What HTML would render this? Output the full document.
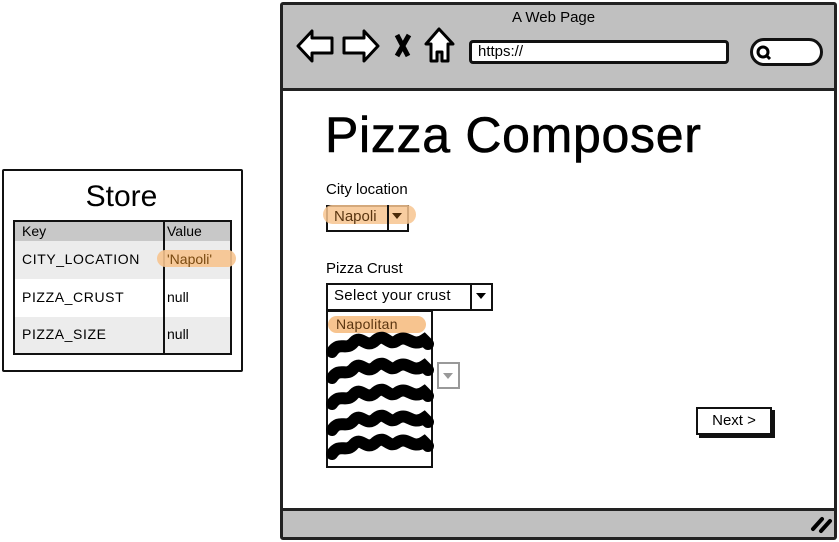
<!DOCTYPE html>
<html><head><meta charset="utf-8"><style>
*{margin:0;padding:0;box-sizing:border-box}
body{width:839px;height:542px;background:#fff;position:relative;overflow:hidden;font-family:"Liberation Sans",sans-serif;color:#000}
.a{position:absolute}
</style></head><body>
<!-- Store -->
<div class="a" style="left:2px;top:169px;width:241px;height:203px;border:2px solid #111;border-radius:2px"></div>
<div class="a" style="left:0;top:180px;width:243px;text-align:center;font-size:30px">Store</div>
<div class="a" style="left:13px;top:220px;width:219px;height:135px;border:2px solid #111">
 <div class="a" style="left:0;top:0;width:215px;height:19px;background:#c8c8c8"></div>
 <div class="a" style="left:0;top:19px;width:215px;height:38px;background:#ececec"></div>
 <div class="a" style="left:0;top:95px;width:215px;height:36px;background:#ececec"></div>
 <div class="a" style="left:148px;top:0;width:2px;height:131px;background:#111"></div>
 <div class="a" style="left:7px;top:1px;font-size:14px">Key</div>
 <div class="a" style="left:152px;top:1px;font-size:14px">Value</div>
 <div class="a" style="left:142px;top:28px;width:79px;height:17px;border-radius:9px;background:#f7c48f;opacity:.9"></div>
 <div class="a" style="left:7px;top:29px;font-size:14px;letter-spacing:.6px">CITY_LOCATION</div>
 <div class="a" style="left:152px;top:29px;font-size:14px;color:#7a4a10">'Napoli'</div>
 <div class="a" style="left:7px;top:67px;font-size:14px;letter-spacing:.6px">PIZZA_CRUST</div>
 <div class="a" style="left:152px;top:67px;font-size:14px">null</div>
 <div class="a" style="left:7px;top:104px;font-size:14px;letter-spacing:.6px">PIZZA_SIZE</div>
 <div class="a" style="left:152px;top:104px;font-size:14px">null</div>
</div>
<!-- Browser -->
<div class="a" style="left:280px;top:2px;width:557px;height:538px;border:3px solid #222;border-radius:3px;background:#fff;overflow:hidden">
 <div class="a" style="left:0;top:0;width:551px;height:86px;background:#c0c0c0;border-bottom:3px solid #222"></div>
 <div class="a" style="left:0;top:503px;width:551px;height:35px;background:#c0c0c0;border-top:3px solid #222"></div>
</div>
<div class="a" style="left:512px;top:9px;font-size:15px">A Web Page</div>
<svg class="a" style="left:290px;top:20px" width="180" height="50" viewBox="0 0 180 50">
 <g fill="#fff" stroke="#000" stroke-width="3" stroke-linejoin="round">
  <path d="M8 26 L22 11 L22 18 L42 18 L42 33 L22 33 L22 41 Z"/>
  <path d="M88 26 L74 11 L74 18 L54 18 L54 33 L74 33 L74 41 Z"/>
  <path d="M149 9 L136 24 L141 24 L141 41 L147 41 L147 32 L152 32 L152 41 L158 41 L158 24 L163 24 Z"/>
 </g>
 <path d="M107 15 L118 36 M119 15 L107 36" stroke="#000" stroke-width="5"/>
</svg>
<div class="a" style="left:469px;top:40px;width:260px;height:24px;background:#fff;border:3px solid #111;border-radius:4px;font-size:15px;padding-left:6px;line-height:18px">https://</div>
<div class="a" style="left:750px;top:38px;width:73px;height:28px;background:#fff;border:3px solid #111;border-radius:14px"></div>
<svg class="a" style="left:754px;top:44px" width="20" height="18"><circle cx="9" cy="8" r="5" fill="none" stroke="#000" stroke-width="3"/><path d="M12 11 L16 15" stroke="#000" stroke-width="3"/></svg>
<div class="a" style="left:325px;top:106px;font-size:50px;letter-spacing:0.7px;-webkit-text-stroke:.6px #000">Pizza Composer</div>
<div class="a" style="left:326px;top:181px;font-size:15px">City location</div>
<div class="a" style="left:326px;top:205px;width:83px;height:27px;border:2px solid #111;background:#fff"></div>
<div class="a" style="left:323px;top:205px;width:93px;height:19px;border-radius:10px;background:#f7c48f;opacity:.85"></div>
<div class="a" style="left:387px;top:205px;width:2px;height:27px;background:#111"></div>
<div class="a" style="left:334px;top:208px;font-size:15px;color:#5a3510">Napoli</div>
<svg class="a" style="left:391px;top:212px" width="12" height="8"><path d="M1 1 L11 1 L6 7Z" fill="#4a2a08"/></svg>
<div class="a" style="left:326px;top:260px;font-size:15px">Pizza Crust</div>
<div class="a" style="left:326px;top:283px;width:167px;height:28px;border:2px solid #111;background:#fff"></div>
<div class="a" style="left:470px;top:283px;width:2px;height:28px;background:#111"></div>
<div class="a" style="left:334px;top:287px;font-size:15px;letter-spacing:.3px">Select your crust</div>
<svg class="a" style="left:475px;top:292px" width="12" height="8"><path d="M1 1 L11 1 L6 7Z" fill="#000"/></svg>
<div class="a" style="left:437px;top:362px;width:23px;height:27px;border:2px solid #999;background:#fff"></div>
<svg class="a" style="left:442px;top:372px" width="12" height="8"><path d="M1 1 L11 1 L6 7Z" fill="#999"/></svg>
<div class="a" style="left:326px;top:310px;width:107px;height:158px;border:2px solid #111;background:#fff"></div>
<div class="a" style="left:328px;top:316px;width:98px;height:17px;border-radius:9px;background:#f7c48f"></div>
<div class="a" style="left:336px;top:316px;font-size:14px;color:#5a3510;letter-spacing:.3px">Napolitan</div>
<svg class="a" style="left:326px;top:330px" width="110" height="140">
 <g fill="none" stroke="#000" stroke-width="12" stroke-linecap="round">
  <path d="M6 22 C14 10 20 22 28 12 C36 4 40 20 50 10 C60 2 62 18 72 10 C82 4 86 18 98 10 L102 14"/>
  <path d="M6 48 C14 36 20 48 28 38 C36 30 40 46 50 36 C60 28 62 44 72 36 C82 30 86 44 98 36 L102 40"/>
  <path d="M6 74 C14 62 20 74 28 64 C36 56 40 72 50 62 C60 54 62 70 72 62 C82 56 86 70 98 62 L102 66"/>
  <path d="M6 100 C14 88 20 100 28 90 C36 82 40 98 50 88 C60 80 62 96 72 88 C82 82 86 96 98 88 L102 92"/>
  <path d="M6 124 C14 112 20 124 28 114 C36 106 40 122 50 112 C60 104 62 120 72 112 C82 106 86 120 98 112 L102 116"/>
 </g>
</svg>
<div class="a" style="left:699px;top:410px;width:76px;height:28px;background:#111"></div>
<div class="a" style="left:696px;top:407px;width:76px;height:28px;border:2px solid #111;background:#fff;font-size:15px;text-align:center;line-height:24px">Next &gt;</div>
<svg class="a" style="left:810px;top:514px" width="24" height="20"><path d="M3 15 L12 5 M11 17 L20 7" stroke="#000" stroke-width="4" stroke-linecap="round"/></svg>
</body></html>
